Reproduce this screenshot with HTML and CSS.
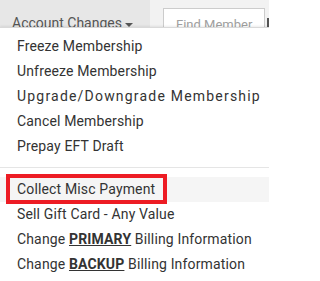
FILE: index.html
```html
<!DOCTYPE html>
<html>
<head>
<meta charset="utf-8">
<link rel="stylesheet" href="styles.css">
</head>
<body>
<div class="page">
  <header class="topbar">
    <div class="nav-left">
      <span class="nav-toggle">Account Changes<span class="caret"></span></span>
    </div>
    <div class="nav-right">
      <div class="search">Find Member</div>
      <div class="search-btn"></div>
    </div>
  </header>
  <ul class="dropdown">
    <li class="item">Freeze Membership</li>
    <li class="item">Unfreeze Membership</li>
    <li class="item wide">Upgrade/Downgrade Membership</li>
    <li class="item">Cancel Membership</li>
    <li class="item">Prepay EFT Draft</li>
    <li class="divider"></li>
    <li class="item active"><span class="mark"></span>Collect Misc Payment</li>
    <li class="item">Sell Gift Card - Any Value</li>
    <li class="item">Change <b class="u">PRIMARY</b> Billing Information</li>
    <li class="item">Change <b class="u">BACKUP</b> Billing Information</li>
  </ul>
</div>
</body>
</html>
```

FILE: styles.css
```css
html, body {
  margin: 0;
  padding: 0;
  background: #ffffff;
}
.page {
  position: relative;
  width: 269px;
  height: 281px;
  overflow: hidden;
  font-family: Roboto, "Liberation Sans", sans-serif;
  font-size: 14px;
}
.topbar {
  display: flex;
  height: 60px;
}
.nav-left {
  width: 150px;
  flex: none;
  background: #e7e7e7;
  padding: 11px 0 0 12px;
  box-sizing: border-box;
}
.nav-toggle {
  color: #555555;
  line-height: 25px;
  display: inline-flex;
  align-items: center;
}
.caret {
  display: inline-block;
  width: 0;
  height: 0;
  margin-left: 3px;
  margin-top: 3px;
  border-top: 4px solid #555555;
  border-left: 4px solid transparent;
  border-right: 4px solid transparent;
}
.nav-right {
  width: 119px;
  flex: none;
  box-sizing: border-box;
  background: #f2f2f2;
  display: flex;
  align-items: flex-start;
  padding: 8px 0 0 13px;
}
.search {
  width: 102px;
  height: 34px;
  box-sizing: border-box;
  background: #ffffff;
  border: 1px solid #cccccc;
  color: #a0a0a0;
  font-size: 13px;
  padding: 5px 0 0 12px;
  line-height: 22px;
  white-space: nowrap;
  overflow: hidden;
  flex: none;
}
.search-btn {
  margin-left: 2px;
  margin-top: 10px;
  width: 6px;
  height: 20px;
  background: #555555;
  flex: none;
}
.dropdown {
  position: absolute;
  top: 27px;
  left: 0;
  width: 290px;
  margin: 0;
  padding: 6px 0;
  list-style: none;
  background: #ffffff;
  border-top: 1px solid #d9d9d9;
  box-shadow: 0 -1px 2px rgba(0,0,0,0.08);
}
.item {
  position: relative;
  padding: 0 17px;
  line-height: 25px;
  height: 25px;
  color: #333333;
  letter-spacing: 0.15px;
  white-space: nowrap;
}
.item.wide {
  letter-spacing: 1.2px;
}
.item.active {
  background: #f5f5f5;
}
.divider {
  height: 1px;
  margin: 8px 0 9px;
  background: #e5e5e5;
}
.u {
  font-weight: 700;
  text-decoration: underline;
}
.mark {
  position: absolute;
  left: 6px;
  top: -3px;
  width: 161px;
  height: 30px;
  box-sizing: border-box;
  border: 4px solid #ed1c24;
}
```
